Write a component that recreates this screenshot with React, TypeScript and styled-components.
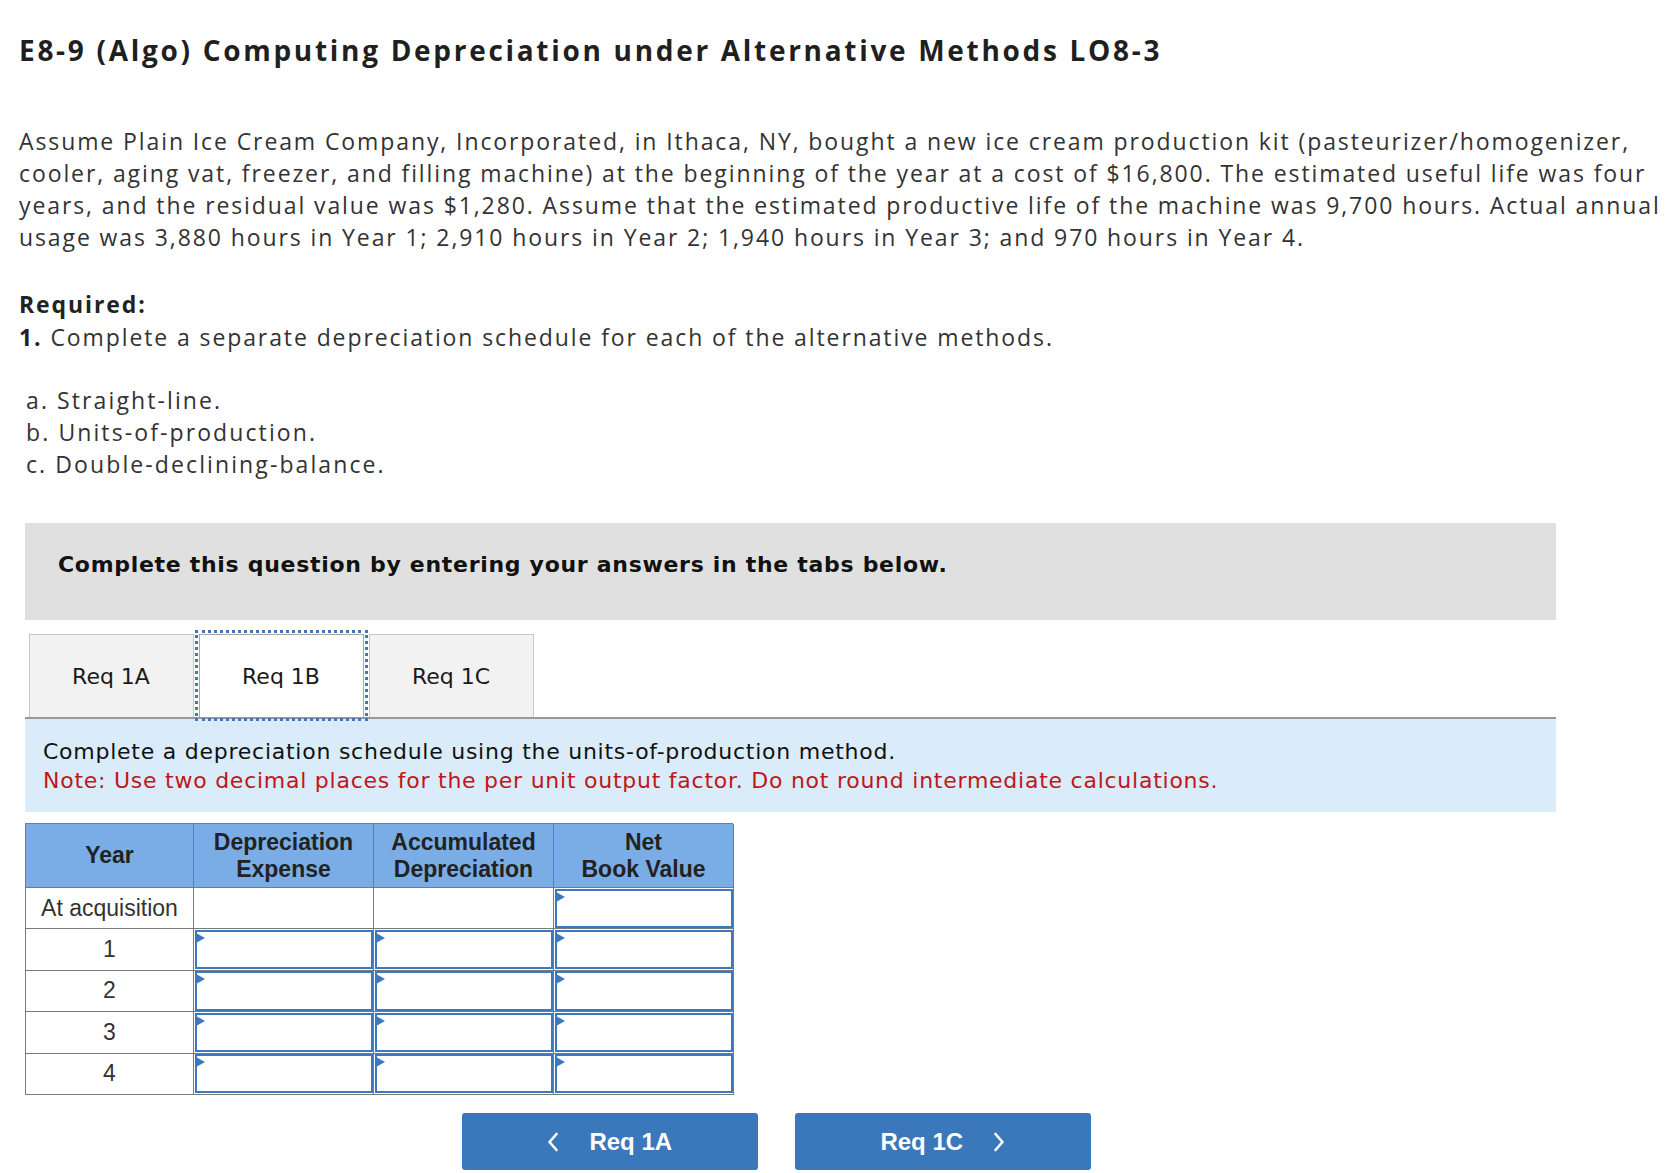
import React from "react";
import styled, { createGlobalStyle } from "styled-components";

const GlobalStyle = createGlobalStyle`
  html, body { margin: 0; padding: 0; background: #ffffff; }
  body { font-family: "Open Sans", "Liberation Sans", sans-serif; color: #2b2b2b; }
  * { box-sizing: border-box; }
`;

const Page = styled.div`
  width: 1679px;
  padding: 33px 0 0 19px;
`;

const Title = styled.h1`
  margin: 0;
  font-family: "Open Sans", sans-serif;
  font-weight: 700;
  font-size: 28px;
  line-height: 34px;
  letter-spacing: 2.7px;
  color: #1f1f1f;
`;

const Body = styled.p`
  margin: 58px 0 0 0;
  width: 1658px;
  font-size: 23px;
  line-height: 32px;
  letter-spacing: 1.9px;
  color: #333;
`;

const Required = styled.div`
  margin-top: 35px;
  font-size: 23px;
  line-height: 33px;
  letter-spacing: 1.9px;
  color: #333;
`;

const Strong = styled.span`
  font-weight: 700;
  color: #222;
`;

const List = styled.div`
  margin: 30px 0 0 7px;
  font-size: 23px;
  line-height: 32px;
  letter-spacing: 2.1px;
  color: #333;
`;

const Question = styled.section`
  margin: 43px 0 0 6px;
  width: 1531px;
`;

const Banner = styled.div`
  height: 97px;
  background: #e0e0e0;
  padding: 26px 0 0 33px;
  font-family: "DejaVu Sans", Verdana, sans-serif;
  font-weight: 700;
  font-size: 22px;
  letter-spacing: 0.7px;
  line-height: 32px;
  color: #111;
`;

const TabRow = styled.div`
  display: flex;
  gap: 5px;
  padding: 14px 0 0 3.5px;
  border-bottom: 2px solid #999;
`;

const Tab = styled.div<{ $active?: boolean }>`
  width: 165px;
  height: 83px;
  display: flex;
  align-items: center;
  justify-content: center;
  font-family: "DejaVu Sans", Verdana, sans-serif;
  font-size: 22px;
  color: #1a1a1a;
  background: ${(p) => (p.$active ? "#ffffff" : "#f2f2f2")};
  border: 1px solid ${(p) => (p.$active ? "#a8a8a8" : "#c8c8c8")};
  border-bottom: none;
  outline: ${(p) => (p.$active ? "3px dotted #3d77c2" : "none")};
  outline-offset: 1px;
`;

const Instructions = styled.div`
  background: #daecf9;
  height: 93px;
  padding: 18px 0 0 18px;
  font-family: "DejaVu Sans", Verdana, sans-serif;
  font-size: 22px;
  letter-spacing: 0.75px;
  line-height: 29px;
  color: #111;
`;

const Note = styled.div`
  color: #c0161b;
`;

const Grid = styled.div`
  margin-top: 11px;
  display: grid;
  grid-template-columns: 168px 180px 180px 180px;
  width: 708px;
  border-top: 1px solid #7a7a7a;
  border-left: 1px solid #7a7a7a;
  font-family: "Liberation Sans", Arial, sans-serif;
`;

const HeadCell = styled.div`
  height: 64px;
  background: #7aade6;
  border-right: 1px solid #7a7a7a;
  border-bottom: 1px solid #7a7a7a;
  display: flex;
  align-items: center;
  justify-content: center;
  text-align: center;
  font-weight: 700;
  font-size: 23px;
  line-height: 26.5px;
  color: #222;
`;

const YearCell = styled.div`
  height: 41.4px;
  border-right: 1px solid #7a7a7a;
  border-bottom: 1px solid #7a7a7a;
  display: flex;
  align-items: center;
  justify-content: center;
  font-size: 23px;
  color: #333;
`;

const DataCell = styled.div`
  height: 41.4px;
  border-right: 1px solid #7a7a7a;
  border-bottom: 1px solid #7a7a7a;
  padding: 0.5px;
  display: flex;
`;

const Input = styled.div`
  position: relative;
  flex: 1;
  border: 2px solid #3b78bf;
  background: #fff;
  &::before {
    content: "";
    position: absolute;
    left: -1px;
    top: 1px;
    border-top: 5px solid transparent;
    border-bottom: 5px solid transparent;
    border-left: 9px solid #3b78bf;
  }
`;

const NavRow = styled.div`
  display: flex;
  gap: 37.5px;
  padding: 18.5px 0 0 437px;
`;

const NavButton = styled.button`
  width: 295.5px;
  height: 57px;
  border: none;
  border-radius: 3px;
  background: #3a77bb;
  color: #fff;
  display: flex;
  align-items: center;
  justify-content: center;
  gap: 30px;
  font-family: "Liberation Sans", Arial, sans-serif;
  font-weight: 700;
  font-size: 24px;
  cursor: pointer;
  svg { display: block; }
`;

const Chevron = ({ dir }: { dir: "left" | "right" }) => (
  <svg width="12" height="20" viewBox="0 0 12 20" fill="none">
    <path
      d={dir === "left" ? "M9.5 2 L2.5 10 L9.5 18" : "M2.5 2 L9.5 10 L2.5 18"}
      stroke="#fff"
      strokeWidth="2.6"
      strokeLinecap="round"
      strokeLinejoin="round"
    />
  </svg>
);

const years = ["1", "2", "3", "4"];

export default function App() {
  return (
    <>
      <GlobalStyle />
      <Page>
        <Title>E8-9 (Algo) Computing Depreciation under Alternative Methods LO8-3</Title>
        <Body>
          Assume Plain Ice Cream Company, Incorporated, in Ithaca, NY, bought a new ice cream production kit
          (pasteurizer/homogenizer, cooler, aging vat, freezer, and filling machine) at the beginning of the year
          at a cost of $16,800. The estimated useful life was four years, and the residual value was $1,280.
          Assume that the estimated productive life of the machine was 9,700 hours. Actual annual usage was 3,880
          hours in Year 1; 2,910 hours in Year 2; 1,940 hours in Year 3; and 970 hours in Year 4.
        </Body>
        <Required>
          <Strong>Required:</Strong>
          <div>
            <Strong>1.</Strong> Complete a separate depreciation schedule for each of the alternative methods.
          </div>
        </Required>
        <List>
          <div>a. Straight-line.</div>
          <div>b. Units-of-production.</div>
          <div>c. Double-declining-balance.</div>
        </List>
        <Question>
          <Banner>Complete this question by entering your answers in the tabs below.</Banner>
          <TabRow>
            <Tab>Req 1A</Tab>
            <Tab $active>Req 1B</Tab>
            <Tab>Req 1C</Tab>
          </TabRow>
          <Instructions>
            <div>Complete a depreciation schedule using the units-of-production method.</div>
            <Note>Note: Use two decimal places for the per unit output factor. Do not round intermediate calculations.</Note>
          </Instructions>
          <Grid>
            <HeadCell>Year</HeadCell>
            <HeadCell>
              Depreciation
              <br />
              Expense
            </HeadCell>
            <HeadCell>
              Accumulated
              <br />
              Depreciation
            </HeadCell>
            <HeadCell>
              Net
              <br />
              Book Value
            </HeadCell>
            <YearCell>At acquisition</YearCell>
            <DataCell />
            <DataCell />
            <DataCell>
              <Input />
            </DataCell>
            {years.map((y) => (
              <React.Fragment key={y}>
                <YearCell>{y}</YearCell>
                <DataCell>
                  <Input />
                </DataCell>
                <DataCell>
                  <Input />
                </DataCell>
                <DataCell>
                  <Input />
                </DataCell>
              </React.Fragment>
            ))}
          </Grid>
          <NavRow>
            <NavButton>
              <Chevron dir="left" />
              <span>Req 1A</span>
            </NavButton>
            <NavButton>
              <span>Req 1C</span>
              <Chevron dir="right" />
            </NavButton>
          </NavRow>
        </Question>
      </Page>
    </>
  );
}
